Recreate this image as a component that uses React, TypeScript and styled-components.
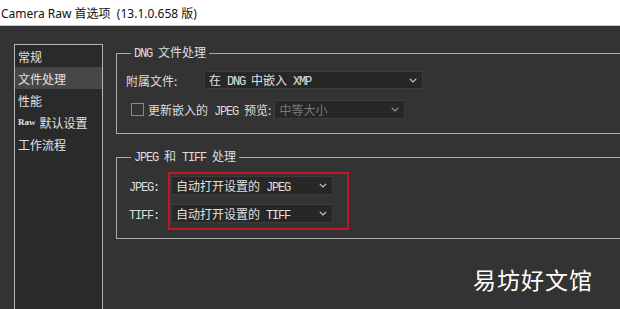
import React from "react";
import styled, { createGlobalStyle } from "styled-components";

const Global = createGlobalStyle`
  html, body { margin: 0; padding: 0; background: #333333; }
  body { width: 620px; height: 309px; overflow: hidden; }
`;

const CJK = `"Noto Sans CJK SC", sans-serif`;

const Window = styled.div`
  width: 620px;
  height: 309px;
  display: flex;
  flex-direction: column;
  overflow: hidden;
  position: relative;
  font-family: ${CJK};
`;

const TitleBar = styled.div`
  height: 25px;
  background: #ffffff;
  border-bottom: 1px solid #c9c9c9;
  display: flex;
  align-items: center;
  padding-left: 1px;
  font-family: "Noto Sans", ${CJK};
  font-size: 12px;
  color: #111;
  white-space: pre;
`;

const Main = styled.div`
  flex: 1;
  background: #333333;
  display: flex;
  padding: 18px 0 0 14px;
  gap: 13px;
  overflow: hidden;
`;

const Sidebar = styled.ul`
  list-style: none;
  margin: 0;
  padding: 0;
  width: 87px;
  flex: none;
  height: 300px;
  background: #2a2a2a;
  border: 1px solid #b4b4b4;
`;

const NavItem = styled.li<{ $active?: boolean }>`
  height: 22px;
  display: flex;
  align-items: center;
  padding-left: 3px;
  font-size: 12px;
  color: #e2e2e2;
  background: ${(p) => (p.$active ? "#474747" : "transparent")};
`;

const Small = styled.span`
  font-family: "Liberation Serif", serif;
  font-size: 9px;
  font-weight: bold;
  margin-right: 4px;
`;

const Content = styled.div`
  display: flex;
  flex-direction: column;
  gap: 14px;
  flex: none;
  width: 560px;
`;

const Group = styled.fieldset<{ $pb: number }>`
  margin: 0;
  padding: 0 9px ${(p) => p.$pb}px 9px;
  border: 1px solid #a9a9a9;
  min-inline-size: 0;
`;

const Legend = styled.legend`
  margin-left: 5px;
  padding: 0 3px;
  line-height: 16px;
  font-size: 12px;
  color: #dedede;
  white-space: pre;
`;

const Latin = styled.span`
  font-family: "Liberation Mono", monospace;
  font-size: 12px;
  letter-spacing: -1.2px;
`;

const Rows = styled.div<{ $top: number; $gap: number }>`
  position: relative;
  display: flex;
  flex-direction: column;
  margin-top: ${(p) => p.$top}px;
  gap: ${(p) => p.$gap}px;
`;

const Row = styled.div<{ $indent?: number }>`
  display: flex;
  align-items: center;
  padding-left: ${(p) => p.$indent ?? 0}px;
  font-size: 12px;
  color: #dedede;
  white-space: pre;
`;

const Label = styled.span<{ $w?: number }>`
  width: ${(p) => (p.$w ? `${p.$w}px` : "auto")};
  margin-right: ${(p) => (p.$w ? 0 : 3)}px;
  flex: none;
  color: #dedede;
`;

const Checkbox = styled.span`
  width: 11px;
  height: 11px;
  border: 1px solid #8a8a8a;
  margin-right: 4px;
  flex: none;
`;

const Select = styled.div<{ $w: number; $h: number; $disabled?: boolean }>`
  width: ${(p) => p.$w}px;
  height: ${(p) => p.$h}px;
  box-sizing: border-box;
  background: #272727;
  border: 1px solid #3c3c3c;
  display: flex;
  align-items: center;
  justify-content: space-between;
  padding: 0 5px 0 4px;
  color: ${(p) => (p.$disabled ? "#7a7a7a" : "#e0e0e0")};
  font-size: 12px;
  flex: none;
`;

const Highlight = styled.div`
  position: absolute;
  left: 42px;
  top: -4px;
  width: 181px;
  height: 58px;
  box-sizing: border-box;
  border: 2px solid #c4161e;
  pointer-events: none;
`;

const Watermark = styled.div`
  position: absolute;
  left: 473px;
  top: 262px;
  font-family: ${CJK};
  font-size: 23px;
  letter-spacing: 1px;
  color: #ffffff;
`;

const Chevron = ({ dim }: { dim?: boolean }) => (
  <svg width="8" height="5" viewBox="0 0 8 5">
    <polyline
      points="0.8,0.8 4,4 7.2,0.8"
      fill="none"
      stroke={dim ? "#9a9a9a" : "#c8c8c8"}
      strokeWidth="1.2"
    />
  </svg>
);

export default function App() {
  return (
    <Window>
      <Global />
      <TitleBar>Camera Raw 首选项  (13.1.0.658 版)</TitleBar>
      <Main>
        <Sidebar>
          <NavItem>常规</NavItem>
          <NavItem $active>文件处理</NavItem>
          <NavItem>性能</NavItem>
          <NavItem>
            <Small>Raw</Small>默认设置
          </NavItem>
          <NavItem>工作流程</NavItem>
        </Sidebar>
        <Content>
          <Group $pb={14}>
            <Legend>
              <Latin>DNG </Latin>文件处理
            </Legend>
            <Rows $top={9} $gap={11}>
              <Row>
                <Label $w={78}>附属文件:</Label>
                <Select $w={219} $h={18}>
                  <span>
                    在<Latin> DNG </Latin>中嵌入<Latin> XMP</Latin>
                  </span>
                  <Chevron />
                </Select>
              </Row>
              <Row $indent={5}>
                <Checkbox />
                <Label>
                  更新嵌入的<Latin> JPEG </Latin>预览:
                </Label>
                <Select $w={131} $h={19} $disabled>
                  <span>中等大小</span>
                  <Chevron dim />
                </Select>
              </Row>
            </Rows>
          </Group>
          <Group $pb={15}>
            <Legend>
              <Latin>JPEG </Latin>和<Latin> TIFF </Latin>处理
            </Legend>
            <Rows $top={10} $gap={9}>
              <Row $indent={3}>
                <Label $w={42}>
                  <Latin>JPEG:</Latin>
                </Label>
                <Select $w={162} $h={19}>
                  <span>
                    自动打开设置的<Latin> JPEG</Latin>
                  </span>
                  <Chevron />
                </Select>
              </Row>
              <Row $indent={3}>
                <Label $w={42}>
                  <Latin>TIFF:</Latin>
                </Label>
                <Select $w={162} $h={19}>
                  <span>
                    自动打开设置的<Latin> TIFF</Latin>
                  </span>
                  <Chevron />
                </Select>
              </Row>
              <Highlight />
            </Rows>
          </Group>
        </Content>
      </Main>
      <Watermark>易坊好文馆</Watermark>
    </Window>
  );
}
